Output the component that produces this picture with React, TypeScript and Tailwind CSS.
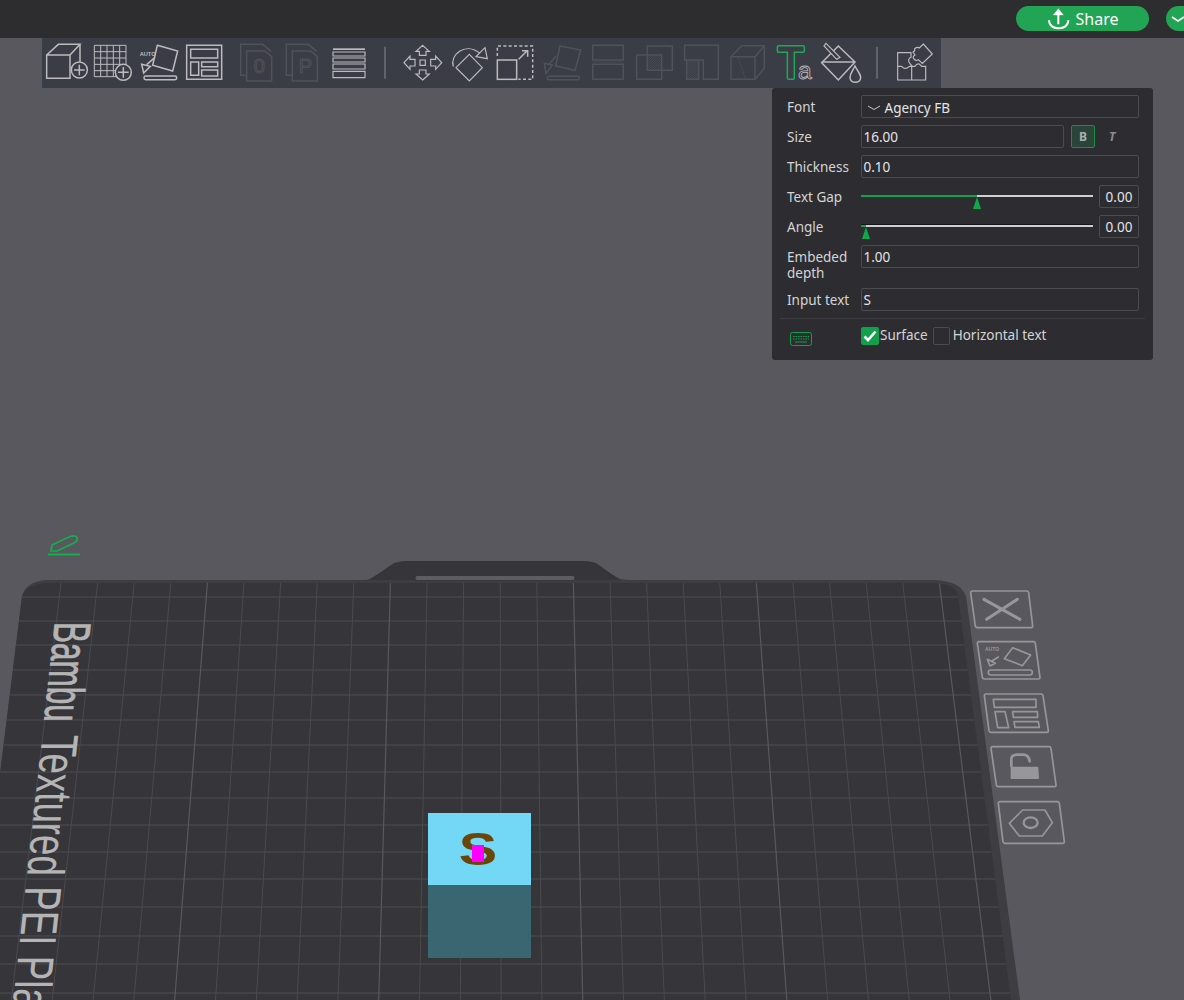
import React from "react";

const L = "#bcbcbe";
const D = "#50525a";
const G = "#1fa855";

function I({ x, y, w = 46, children, cls = "" }: { x: number; y: number; w?: number; children: React.ReactNode; cls?: string }) {
  return (
    <svg width={w} height={50} viewBox={`${x} ${y} ${w * 3} 150`} className={"block shrink-0 " + cls} fill="none" strokeWidth={4.5} stroke={L}>
      {children}
    </svg>
  );
}

function Divider({ x, y, cls = "" }: { x: number; y: number; cls?: string }) {
  return (
    <I x={x} y={y} w={4} cls={cls}>
      <line x1={x + 6} x2={x + 6} y1={y + 26} y2={y + 122} stroke="#77777b" strokeWidth={4} />
    </I>
  );
}

function Hatch({ x, y, w, h }: { x: number; y: number; w: number; h: number }) {
  const lines = [];
  for (let i = 6; i < w + h; i += 7) {
    const x1 = x + Math.min(i, w);
    const y1 = y + Math.max(0, i - w);
    const x2 = x + Math.max(0, i - h);
    const y2 = y + Math.min(i, h);
    lines.push(<line key={i} x1={x1} y1={y1} x2={x2} y2={y2} strokeWidth={2} />);
  }
  return <g>{lines}</g>;
}

function Toolbar() {
  return (
    <div className="ml-[42px] w-[899px] h-[50px] bg-[#3a3d45] flex items-start pl-[2px]">
      <I x={12} y={6}>
        <path d="M20 57H90V127H20ZM20 57L55 25H120L90 57M120 25V78M90 127" />
        <circle cx={118} cy={102} r={24} fill="#3a3d45" />
        <path d="M118 86V118M102 102H134" />
      </I>
      <I x={150} y={6}>
        <path d="M163 28H258V122H163ZM163 47H258M163 66H258M163 85H258M163 104H258M182 28V122M201 28V122M220 28V122M239 28V122" strokeWidth={3} />
        <circle cx={250} cy={109} r={24} fill="#3a3d45" />
        <path d="M250 93V125M234 109H266" />
      </I>
      <I x={288} y={6}>
        <text x={299} y={59} fontSize={17} fontWeight={700} fill={L} stroke="none" fontFamily="'Liberation Sans',sans-serif">AUTO</text>
        <path d="M352 28L413 45L398 105L338 88Z" />
        <path d="M345 64L320 86M305 85L331 91L311 111Z" />
        <rect x={312} y={120} width={98} height={11} rx={5} />
      </I>
      <I x={426} y={6}>
        <path d="M440 28H545V130H440ZM452 40H533V66H452ZM452 78H476V118H452ZM485 78H533V92H485ZM485 102H533V120H485Z" />
      </I>
      <I x={582} y={6} cls="ml-[6px]">
        <g stroke={D}>
          <path d="M620 118H602V25H668L693 46" />
          <path d="M620 45H675L695 62V135H620Z" />
          <text x={658} y={112} textAnchor="middle" fontSize={60} fill="none" strokeWidth={3} fontFamily="'Liberation Sans',sans-serif">0</text>
        </g>
      </I>
      <I x={720} y={6}>
        <g stroke={D}>
          <path d="M757 118H739V25H805L830 46" />
          <path d="M757 45H812L832 62V135H757Z" />
          <text x={796} y={112} textAnchor="middle" fontSize={60} fill="none" strokeWidth={3} fontFamily="'Liberation Sans',sans-serif">P</text>
        </g>
      </I>
      <I x={855} y={6}>
        <rect x={876} y={37} width={96} height={5} fill={L} stroke="none" />
        <path d="M876 48H972V60H876ZM876 66H972V78H876ZM876 84H972V99H876ZM876 106H972V125H876Z" strokeWidth={3.5} />
      </I>
      <Divider x={1026} y={6} cls="ml-[11px]" />
      <I x={30} y={6} cls="ml-[13px]">
        <path d="M98 28L118 46H108V58H88V46H78ZM98 132L118 114H108V102H88V114H78ZM42 80L60 60V70H75V90H60V100ZM155 80L137 60V70H122V90H137V100ZM90 72H106V88H90Z" strokeWidth={3.5} />
      </I>
      <I x={168} y={6}>
        <path d="M238 55L277 95L238 135L198 95Z" strokeWidth={3.5} />
        <path d="M190 92C178 58 225 16 270 52" strokeWidth={3.5} />
        <path d="M285 35L292 68L258 62Z" strokeWidth={3.5} />
      </I>
      <I x={306} y={6}>
        <rect x={322} y={72} width={58} height={58} />
        <path d="M322 60V30H428V130H385" strokeDasharray="9 7" />
        <path d="M386 70L410 46M396 44H413V62" />
      </I>
      <I x={447} y={6} cls="ml-[1px]">
        <g stroke={D}>
          <path d="M510 30L572 42L555 103L497 90Z" />
          <path d="M498 60L478 84M463 82L487 87L468 112Z" />
          <rect x={472} y={121} width={96} height={10} rx={4} />
        </g>
      </I>
      <I x={585} y={6}>
        <g stroke={D}>
          <path d="M608 28H700V72H608ZM608 85H700V130H608Z" />
          <path d="M608 78H700" strokeDasharray="5 3" strokeWidth={3} />
        </g>
      </I>
      <I x={723} y={6}>
        <g stroke={D}>
          <path d="M772 30H847V103H772ZM740 57H815V130H740Z" />
          <Hatch x={772} y={57} w={43} h={46} />
        </g>
      </I>
      <I x={867} y={6} cls="ml-[2px]">
        <g stroke={D}>
          <path d="M884 28H985V130H940V72H884ZM890 72H926V130H890Z" />
          <Hatch x={890} y={72} w={36} h={58} />
        </g>
      </I>
      <I x={15} y={114}>
        <g stroke={D}>
          <path d="M33 170H105V238H33ZM33 170L65 137H133L105 170M133 137V205L105 238" />
          <path d="M55 170L62 195L68 210L75 238" strokeDasharray="4 4" strokeWidth={3} />
        </g>
      </I>
      <I x={153} y={114}>
        <path d="M176 137H249Q253 137 253 141V153Q253 157 249 157H223V234Q223 238 219 238H206Q202 238 202 234V157H176Q172 157 172 153V141Q172 137 176 137Z" stroke={G} />
        <text x={234} y={238} fontSize={74} fill="none" stroke={L} strokeWidth={2.5} fontFamily="'Liberation Sans',sans-serif">a</text>
      </I>
      <I x={294} y={114} cls="ml-[1px]">
        <path d="M355 138L405 186L355 240L305 188ZM305 186H405" />
        <path d="M318 130L360 172L350 178L312 138Z" strokeWidth={3.5} fill="#3a3d45" />
        <path d="M405 198C396 216 390 222 390 232C390 252 422 252 422 232C422 222 414 216 405 198Z" />
      </I>
      <Divider x={466} y={114} cls="ml-[11px]" />
      <I x={516} y={114} cls="ml-[13px]">
        <path d="M533 158H573V172Q563 176 567 186Q571 194 575 196V240H533ZM533 199H545Q553 208 561 204Q565 202 568 199H575M575 199H585Q590 190 598 192Q602 196 605 199H617V240H575" strokeWidth={3.5} />
        <path d="M610 132L637 162L607 190L595 179Q587 184 581 176Q577 170 585 165L579 156Q586 154 584 146Q592 140 598 144Z" strokeWidth={3.5} />
      </I>
    </div>
  );
}

function Row({ label, children, cls = "h-[23px]" }: { label: React.ReactNode; children: React.ReactNode; cls?: string }) {
  return (
    <div className={"flex " + cls}>
      <div className="w-[74px] shrink-0 leading-[25px] text-[#d4d4d6]">{label}</div>
      <div className="flex-1 flex min-w-0">{children}</div>
    </div>
  );
}

function Field({ children, cls = "flex-1" }: { children: React.ReactNode; cls?: string }) {
  return <div className={"h-[23px] border border-[#4b4b51] rounded-[2px] pl-[1.5px] leading-[23px] text-[#e4e4e6] " + cls}>{children}</div>;
}

function Slider({ green, thumb, dark }: { green: number; thumb: number; dark?: boolean }) {
  return (
    <div className="flex w-full">
      <div className="relative w-[232px] mr-[6px] shrink-0">
        {dark && <div className="h-[1px] mt-[9px] bg-[#16161a]" />}
        <div className={(dark ? "" : "mt-[10px] ") + "flex h-[2px]"}>
          <div className="bg-[#12a04c]" style={{ width: green }} />
          <div className="flex-1 bg-[#cfcfcf]" />
        </div>
        <svg className="absolute top-[12px]" style={{ left: thumb - 5 }} width={10} height={12} viewBox="0 0 10 12">
          <path d="M5 0L9 12H1Z" fill="#0fa84a" />
        </svg>
      </div>
      <div className="w-[40px] h-[23px] border border-[#4b4b51] rounded-[2px] text-center leading-[23px] text-[#e4e4e6]">0.00</div>
    </div>
  );
}

function Panel() {
  return (
    <div className="absolute left-[772px] top-[88px] w-[381px] h-[272px] bg-[#2d2d31] rounded-[3px] pt-[7px] text-[13.5px] font-['Noto_Sans',sans-serif]">
      <div className="pl-[15px] pr-[14px] flex flex-col gap-[7px]">
        <Row label="Font">
          <Field>
            <span className="inline-flex items-center">
              <svg width={14} height={8} viewBox="0 0 14 8" className="ml-[3px] mr-[4px]" fill="none" stroke="#c8c8ca" strokeWidth={1}>
                <path d="M1 2L7 5.5L13 2" />
              </svg>
              Agency FB
            </span>
          </Field>
        </Row>
        <Row label="Size">
          <Field>16.00</Field>
          <div className="ml-[7px] w-[24px] h-[23px] bg-[#2b4439] border border-[#1c8a49] rounded-[2px] flex items-center justify-center text-[12px] font-bold text-[#a8b0ac]">B</div>
          <div className="w-[44px] h-[23px] pl-[14px] flex items-center text-[12px] font-bold italic text-[#8c8c90]">T</div>
        </Row>
        <Row label="Thickness"><Field>0.10</Field></Row>
        <Row label="Text Gap"><Slider green={116} thumb={116} /></Row>
        <Row label="Angle"><Slider green={5} thumb={5} dark /></Row>
        <Row label={<span className="block leading-[16px] pt-[4px]">Embeded depth</span>} cls="h-[36px]"><Field>1.00</Field></Row>
        <Row label="Input text"><Field>S</Field></Row>
      </div>
      <div className="mx-[8px] mt-[7px] h-[1px] bg-[#3c3c41]" />
      <div className="flex pl-[18px] mt-[8px]">
        <svg width={22} height={14} viewBox="0 0 22 14" className="mt-[5px]" fill="none" stroke="#12a04c">
          <rect x={0.5} y={0.5} width={21} height={13} rx={2} />
          <path d="M3 4.5H19M3 7H19" strokeDasharray="1.5 1" />
          <path d="M5 10H17" />
        </svg>
        <div className="ml-[49px] w-[18px] h-[18px] bg-[#12a04c] rounded-[2px] flex items-center justify-center">
          <svg width={14} height={12} viewBox="0 0 14 12" fill="none" stroke="#fff" strokeWidth={2.6}>
            <path d="M1.5 6.5L5 10L12.5 1.5" />
          </svg>
        </div>
        <div className="ml-[1px] text-[#d4d4d6] leading-[16px]">Surface</div>
        <div className="ml-[5px] w-[17px] h-[18px] border border-[#4b4b51] rounded-[2px]" />
        <div className="ml-[3px] text-[#d4d4d6] leading-[16px]">Horizontal text</div>
      </div>
    </div>
  );
}

const HY = [597, 621, 645, 670, 695, 720, 745, 772, 798, 825, 852, 879, 907, 936, 964, 993];
const XC = 492;

function Scene() {
  const bed =
    "M45 580L365 580Q371 580 377 577L394 565Q400 561 408 561L582 561Q590 561 596 565L616 577Q621 580 630 580L935 580Q960 581 966 596L1020 1000L-28 1000L22 596Q26 582 45 580Z";
  const inner =
    "M45 583L935 583Q955 584 958 596L1011 1000L-28 1000L22 597Q26 585 45 583Z";
  const verticals = [];
  for (let k = 0; k <= 24; k++) {
    const top = 61 + 36.6 * k;
    const bottom = XC + (top - XC) * 1.115;
    verticals.push(
      <line key={k} x1={top} y1={583} x2={bottom} y2={1000} stroke={k % 5 === 4 ? "#58585d" : "#4a4a4f"} strokeWidth={k % 5 === 4 ? 1.2 : 1} />
    );
  }
  const S = "#97979b";
  return (
    <svg width={1184} height={912} viewBox="0 88 1184 912" className="block">
      <defs>
        <clipPath id="inner-bed"><path d={inner} /></clipPath>
      </defs>

      <g fill="none" stroke="#12b04c">
        <path d="M48 554.5H80" strokeWidth={2} />
        <path d="M51 551L52 545L70 536.5Q75 535 77 537.5Q78 541 74 543L57 551Z" strokeWidth={1.7} />
      </g>

      <path d={bed} fill="#3d3d42" />
      <path d={inner} fill="#35353a" />
      <path d="M368 580L378 574L394 563Q400 561 408 561L582 561Q590 561 596 563L620 580Z" fill="#35353a" />
      <rect x={415} y={575.5} width={160} height={5} rx={2.5} fill="#5c5c62" stroke="#2f2f33" strokeWidth={0.7} />

      <g clipPath="url(#inner-bed)">
        {HY.map((y) => (
          <line key={y} x1={-30} x2={1030} y1={y} y2={y} stroke="#4e4e53" strokeWidth={1.2} />
        ))}
        {verticals}
      </g>

      <text transform="matrix(-0.066 0.606 -1 0 55 622)" fontSize={52} fill="#b4b4b4" stroke="#b4b4b4" strokeWidth={0.8} fontFamily="'Liberation Sans',sans-serif">
        Bambu
      </text>
      <text transform="matrix(-0.078 0.707 -1 0 42.5 735)" fontSize={52} fill="#b4b4b4" fontFamily="'Liberation Sans',sans-serif">
        Textured PEI Plate
      </text>

      <rect x={428} y={885} width={103} height={73} fill="#3a6672" />
      <rect x={428} y={813} width={103} height={72} fill="#73d8f5" />
      <text transform="translate(478 865) scale(1.25 1)" textAnchor="middle" fontSize={46} fontWeight={700} fill="#6b4608" fontFamily="'Liberation Sans',sans-serif">
        S
      </text>
      <rect x={472} y={845} width={12} height={17} fill="#ff00ff" />

      <g transform="translate(960 580) scale(0.3333)" fill="none" stroke={S} strokeWidth={5} strokeLinejoin="round" strokeLinecap="round">
        <path d="M36 33H200Q205 33 206 38L218 138Q218 143 213 143H52Q47 143 46 138L32 38Q32 33 36 33Z" />
        <path d="M72 58L180 118M172 58L80 118" strokeWidth={9} />

        <path d="M57 185H220Q225 185 226 190L240 292Q240 297 235 297H73Q68 297 67 292L52 190Q52 185 57 185Z" />
        <text x={75} y={212} fontSize={15} fontWeight={700} fill={S} stroke="none" fontFamily="'Liberation Sans',sans-serif">AUTO</text>
        <path d="M158 203L212 225L187 257L133 236Z" />
        <path d="M115 231L96 243M82 238L106 250L90 258Z" />
        <path d="M92 270H210Q217 270 217 277Q217 285 210 285H92Q85 285 85 277Q85 270 92 270Z" />

        <path d="M78 342H243Q248 342 249 347L265 452Q265 457 260 457H93Q88 457 87 452L73 347Q73 342 78 342Z" />
        <path d="M100 358H228V382H103ZM105 395H135L146 443H113ZM158 395H232L233 412H160ZM162 425H235L238 442H165Z" />

        <path d="M98 500H267Q272 500 273 505L288 615Q288 620 283 620H115Q110 620 109 615L93 505Q93 500 98 500Z" />
        <path d="M154 558V538Q154 524 172 524H190Q206 524 209 544" strokeWidth={8} />
        <path d="M152 560H232Q235 560 235 564L237 594Q237 597 233 597H155Q152 597 152 594Z" fill={S} stroke="none" />

        <path d="M120 665H292Q297 665 298 670L313 785Q313 790 308 790H135Q130 790 129 785L115 670Q115 665 120 665Z" />
        <path d="M188 690H255L277 728L247 768H178L148 730Z" />
        <ellipse cx={212} cy={728} rx={21} ry={16} strokeWidth={7} />
      </g>
    </svg>
  );
}

export default function App() {
  return (
    <div className="relative w-[1184px] h-[1000px] overflow-hidden bg-[#58585e] font-['Noto_Sans',sans-serif]">
      <div className="h-[38px] bg-[#2d2d30] flex items-start pt-[6px] pl-[1016px]">
        <div className="w-[133px] h-[25px] shrink-0 rounded-full bg-[#21a453] flex items-center justify-center text-white text-[16px]">
          <svg width={24} height={24} viewBox="985 20 70 72" className="mr-[5px]" fill="none" stroke="#fff" strokeWidth={6}>
            <path d="M1018 34V72M990 60C990 92 1048 92 1048 60" />
            <path d="M1003 44L1018 25L1033 44Z" fill="#fff" strokeWidth={1} />
          </svg>
          Share
        </div>
        <div className="ml-[17px] w-[40px] h-[25px] shrink-0 rounded-full bg-[#21a453] flex items-center pl-[5px]">
          <svg width={14} height={8} viewBox="0 0 14 8" fill="none" stroke="#fff" strokeWidth={1.6}>
            <path d="M1 2L7 6L13 2" />
          </svg>
        </div>
      </div>
      <Toolbar />
      <Scene />
      <Panel />
    </div>
  );
}
